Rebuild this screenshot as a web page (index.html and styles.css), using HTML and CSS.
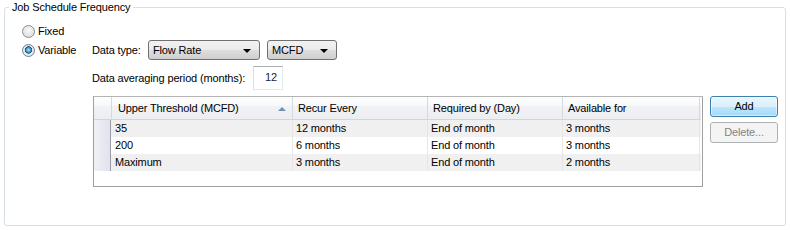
FILE: index.html
```html
<!DOCTYPE html>
<html>
<head>
<meta charset="utf-8">
<link rel="stylesheet" href="styles.css">
</head>
<body>
<fieldset class="group">
  <legend class="group-title">Job Schedule Frequency</legend>
  <div class="opt-row opt-fixed">
    <span class="radio"></span><span class="radio-label">Fixed</span>
  </div>
  <div class="opt-row opt-variable">
    <span class="radio checked"></span><span class="radio-label var-label">Variable</span>
    <span class="field-label dt-label">Data type:</span>
    <div class="select sel-type"><span>Flow Rate</span><i class="arrow"></i></div>
    <div class="select sel-unit"><span>MCFD</span><i class="arrow"></i></div>
  </div>
  <div class="avg-row">
    <span class="field-label avg-label">Data averaging period (months):</span>
    <div class="textbox">12</div>
  </div>
  <div class="grid-row">
    <div class="grid">
      <div class="g-head">
        <div class="rh"></div>
        <div class="hc c1">Upper Threshold (MCFD)<i class="sort"></i></div>
        <div class="hc c2">Recur Every</div>
        <div class="hc c3">Required by (Day)</div>
        <div class="hc c4">Available for</div>
      </div>
      <div class="g-row alt">
        <div class="rh"></div>
        <div class="cell c1">35</div>
        <div class="cell c2">12 months</div>
        <div class="cell c3">End of month</div>
        <div class="cell c4">3 months</div>
      </div>
      <div class="g-row">
        <div class="rh"></div>
        <div class="cell c1">200</div>
        <div class="cell c2">6 months</div>
        <div class="cell c3">End of month</div>
        <div class="cell c4">3 months</div>
      </div>
      <div class="g-row alt">
        <div class="rh"></div>
        <div class="cell c1">Maximum</div>
        <div class="cell c2">3 months</div>
        <div class="cell c3">End of month</div>
        <div class="cell c4">2 months</div>
      </div>
    </div>
    <div class="buttons">
      <div class="btn btn-default">Add</div>
      <div class="btn btn-disabled">Delete...</div>
    </div>
  </div>
</fieldset>
</body>
</html>
```
FILE: styles.css
```css
html, body {
  margin: 0;
  padding: 0;
  background: #ffffff;
}
body {
  font-family: "Liberation Sans", Arial, sans-serif;
  font-size: 11px;
  letter-spacing: -0.15px;
  color: #000;
  width: 790px;
  height: 230px;
  overflow: hidden;
}
.group {
  margin: 0 0 0 4px;
  padding: 0;
  width: 780px;
  height: 224px;
  border: 1px solid #d5dfe5;
  border-radius: 3px;
  box-sizing: content-box;
}
.group-title {
  margin-left: 4px;
  padding: 0 3px 0 3px;
  line-height: 14px;
  height: 14px;
}
.opt-row {
  display: flex;
  align-items: center;
  padding-left: 17px;
}
.opt-fixed {
  margin-top: 10px;
  height: 14px;
}
.opt-variable {
  margin-top: 2px;
  height: 20px;
}
.radio {
  width: 11px;
  height: 11px;
  border: 1px solid #8d8d8d;
  border-radius: 50%;
  background: radial-gradient(circle at 50% 40%, #f8f8f8 0%, #e6e6e6 55%, #d2d2d2 100%);
  box-sizing: content-box;
  flex: none;
}
.radio.checked {
  border-color: #6e7f8e;
  background: radial-gradient(circle at 50% 45%, #bde0f5 0%, #4aa2d6 25%, #1a4f78 42%, #dfe6ec 48%, #f2f4f6 100%);
}
.radio-label {
  margin-left: 3px;
  line-height: 14px;
}
.var-label {
  width: 54px;
  flex: none;
}
.field-label {
  line-height: 14px;
  flex: none;
}
.dt-label {
  width: 56px;
}
.select {
  height: 20px;
  box-sizing: border-box;
  border: 1px solid #707070;
  border-radius: 3px;
  background: linear-gradient(#f2f2f2 0%, #ebebeb 50%, #dddddd 51%, #cfcfcf 100%);
  display: flex;
  align-items: center;
  padding-left: 4px;
  position: relative;
  flex: none;
}
.sel-type {
  width: 112px;
}
.sel-unit {
  margin-left: 7px;
  width: 70px;
}
.arrow {
  position: absolute;
  right: 8px;
  top: 8px;
  width: 0;
  height: 0;
  border-left: 4px solid transparent;
  border-right: 4px solid transparent;
  border-top: 4px solid #000;
}
.avg-row {
  display: flex;
  align-items: center;
  margin-top: 6px;
  padding-left: 87px;
  height: 24px;
}
.avg-label {
  width: 161px;
}
.textbox {
  width: 30px;
  height: 24px;
  box-sizing: border-box;
  border: 1px solid #e2e3ea;
  border-top-color: #abadb3;
  border-left-color: #dbdfe6;
  border-right-color: #e3e9ef;
  border-bottom-color: #e3e9ef;
  text-align: right;
  padding-right: 5px;
  line-height: 20px;
  color: #1a1a40;
}
.grid-row {
  display: flex;
  margin-top: 6px;
  padding-left: 88px;
}
.grid {
  width: 610px;
  height: 91px;
  box-sizing: border-box;
  border: 1px solid #a0a0a0;
  border-top-color: #b4b4b4;
  background: #fff;
}
.g-head, .g-row {
  display: flex;
  width: 607px;
}
.g-head {
  height: 23px;
  background: linear-gradient(#ffffff 0%, #f7f8fa 40%, #f1f2f4 41%, #eceef1 100%);
  border-bottom: 1px solid #d5d5d5;
  box-sizing: border-box;
}
.g-head .rh {
  width: 18px;
  border-right: 1px solid #d5dadf;
  background: transparent;
}
.rh {
  width: 17px;
  flex: none;
  box-sizing: border-box;
  border-right: 1px solid #9a9aa8;
  background: linear-gradient(90deg, #f0f0f6, #e2e2ec);
}
.g-row {
  height: 17px;
  line-height: 17px;
  background: #fff;
}
.g-row.alt {
  background: #f0f0f0;
}
.hc {
  box-sizing: border-box;
  border-right: 1px solid #d5dadf;
  padding-left: 6px;
  line-height: 22px;
  position: relative;
  flex: none;
}
.cell {
  box-sizing: border-box;
  flex: none;
  padding-left: 3px;
  border-right: 1px solid #e6e6e6;
  white-space: nowrap;
}
.g-head .c1 { width: 181px; padding-left: 6px; }
.g-row .c1 { width: 182px; padding-left: 4px; }
.c2 { width: 135px; }
.c3 { width: 135px; }
.c4 { width: 137px; }
.hc.c2 { padding-left: 5px; }
.hc.c3 { padding-left: 5px; }
.hc.c4 { padding-left: 5px; }
.sort {
  position: absolute;
  right: 6px;
  top: 10px;
  width: 0;
  height: 0;
  border-left: 4px solid transparent;
  border-right: 4px solid transparent;
  border-bottom: 4px solid #6a94b8;
}
.buttons {
  margin-left: 7px;
  display: flex;
  flex-direction: column;
  gap: 5px;
}
.btn {
  width: 68px;
  height: 21px;
  box-sizing: border-box;
  border-radius: 3px;
  text-align: center;
  line-height: 19px;
}
.btn-default {
  border: 1px solid #3c7fb1;
  background: linear-gradient(#eaf6fd 0%, #d9f0fc 50%, #bee6fd 51%, #a7d9f5 100%);
  box-shadow: inset 0 0 0 1px rgba(255,255,255,0.5);
}
.btn-disabled {
  border: 1px solid #adb2b5;
  background: #f4f4f4;
  color: #838383;
}
```
